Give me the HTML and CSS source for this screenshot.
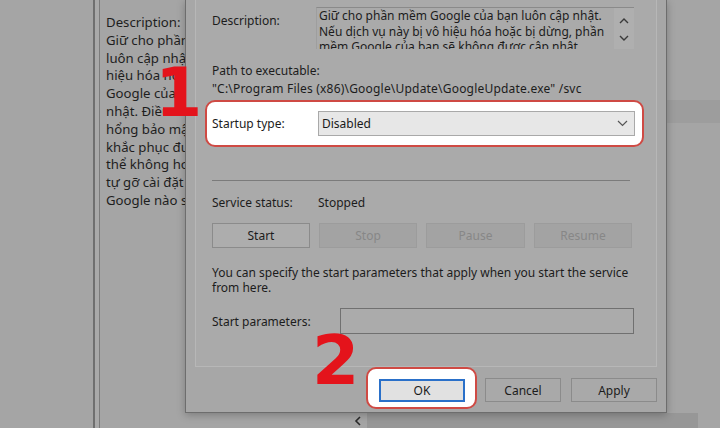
FILE: index.html
```html
<!DOCTYPE html>
<html lang="vi">
<head>
<meta charset="utf-8">
<title>Google Update Service Properties</title>
<link rel="stylesheet" href="styles.css">
</head>
<body>
<div class="screen">
  <div class="bg-left"></div>
  <div class="splitter"></div>
  <div class="bg-main">
    <div class="bg-top">
      <div class="desc-pane">
        <div>Description:</div>
        <div>Giữ cho phần</div>
        <div>luôn cập nhật.</div>
        <div>hiệu hóa hoặc</div>
        <div>Google của</div>
        <div>nhật. Điều</div>
        <div>hổng bảo mật</div>
        <div>khắc phục được</div>
        <div>thể không hoạt</div>
        <div>tự gỡ cài đặt</div>
        <div>Google nào sử</div>
      </div>
      <div class="under-dialog"></div>
      <div class="list-area"><div class="list-row"></div></div>
    </div>
    <div class="hscroll">
      <svg class="hs-arrow" width="8" height="10" viewBox="0 0 8 10"><polyline points="6,1 2,5 6,9" fill="none" stroke="#2a2a2a" stroke-width="1.6"/></svg>
      <div class="hs-track"></div>
    </div>
  </div>

  <div class="dialog">
    <div class="panel">
      <div class="row-desc">
        <div class="lbl lbl-desc">Description:</div>
        <div class="textarea">
          <div class="ta-text">
            <div>Giữ cho phần mềm Google của bạn luôn cập nhật.</div>
            <div>Nếu dịch vụ này bị vô hiệu hóa hoặc bị dừng, phần</div>
            <div>mềm Google của bạn sẽ không được cập nhật,</div>
          </div>
          <div class="ta-scroll">
            <svg width="10" height="7" viewBox="0 0 10 7"><polyline points="1,6 5,2 9,6" fill="none" stroke="#3a3a3a" stroke-width="1.4"/></svg>
            <svg width="10" height="7" viewBox="0 0 10 7"><polyline points="1,1 5,5 9,1" fill="none" stroke="#3a3a3a" stroke-width="1.4"/></svg>
          </div>
        </div>
      </div>
      <div class="path-lbl">Path to executable:</div>
      <div class="path-val">"C:\Program Files (x86)\Google\Update\GoogleUpdate.exe" /svc</div>

      <div class="startup">
        <div class="lbl lbl-startup">Startup type:</div>
        <div class="select">
          <span>Disabled</span>
          <svg width="11" height="7" viewBox="0 0 11 7"><polyline points="1,1 5.5,5.5 10,1" fill="none" stroke="#555" stroke-width="1.2"/></svg>
        </div>
      </div>

      <div class="separator"></div>

      <div class="status-row">
        <div class="lbl lbl-status">Service status:</div>
        <div>Stopped</div>
      </div>

      <div class="svc-buttons">
        <div class="btn">Start</div>
        <div class="btn disabled">Stop</div>
        <div class="btn disabled">Pause</div>
        <div class="btn disabled">Resume</div>
      </div>

      <div class="hint">You can specify the start parameters that apply when you start the service<br>from here.</div>

      <div class="params-row">
        <div class="lbl lbl-params">Start parameters:</div>
        <div class="input"></div>
      </div>
    </div>

    <div class="footer">
      <div class="ok-highlight"><div class="btn ok">OK</div></div>
      <div class="btn foot-btn cancel">Cancel</div>
      <div class="btn foot-btn apply">Apply</div>
    </div>
  </div>

  <span class="num num1">1</span>
  <span class="num num2">2</span>
</div>
</body>
</html>
```
FILE: styles.css
```css
html, body {
  margin: 0;
  padding: 0;
}
body {
  width: 720px;
  height: 428px;
  overflow: hidden;
  background: #a5a5a5;
  font-family: "Noto Sans", "Open Sans", sans-serif;
  font-size: 12px;
  color: #1c1c1c;
}
.screen {
  position: relative;
  width: 720px;
  height: 428px;
  display: flex;
  overflow: hidden;
  background: #a5a5a5;
}
.bg-left {
  width: 93px;
  flex: none;
}
.splitter {
  width: 7px;
  flex: none;
  box-sizing: border-box;
  border-left: 2px solid #6f6f6f;
  border-right: 1px solid #7c7c7c;
  background: #a9a9a9;
}
.bg-main {
  flex: 1;
  display: flex;
  flex-direction: column;
}
.bg-top {
  flex: 1;
  display: flex;
  overflow: hidden;
}
.desc-pane {
  width: 85px;
  flex: none;
  box-sizing: border-box;
  padding: 14px 0 0 6px;
  font-size: 13.2px;
  line-height: 17.8px;
  white-space: nowrap;
  overflow: hidden;
  color: #1e1e1e;
}
.under-dialog {
  width: 482px;
  flex: none;
}
.list-area {
  flex: 1;
  padding-top: 100px;
}
.list-row {
  height: 23px;
  background: #9d9d9d;
}
.hscroll {
  height: 15px;
  display: flex;
  align-items: center;
  padding-left: 254px;
}
.hs-arrow {
  display: block;
  margin-right: 5px;
  margin-top: 1px;
}
.hs-track {
  width: 331px;
  height: 15px;
  background: #979797;
}

/* dialog window */
.dialog {
  position: absolute;
  left: 185px;
  top: 0;
  width: 482px;
  height: 413px;
  box-sizing: border-box;
  border: 1px solid #6d6d6d;
  border-top: none;
  padding: 0 9px;
  background: #a7a7a7;
  box-shadow: 0 2px 8px rgba(0, 0, 0, 0.25);
}
.panel {
  height: 367px;
  box-sizing: border-box;
  border: 1px solid #b7b7b7;
  border-top: none;
  padding: 7px 0 0 16px;
  background: #aaaaaa;
}
.lbl {
  flex: none;
}
.row-desc {
  display: flex;
  align-items: flex-start;
}
.lbl-desc {
  width: 104px;
  margin-top: 6px;
  line-height: 16px;
}
.textarea {
  width: 318px;
  height: 42px;
  box-sizing: border-box;
  border-top: 1px solid #8a8a8a;
  border-left: 1px solid #9e9e9e;
  display: flex;
}
.ta-text {
  flex: 1;
  padding-left: 2px;
  line-height: 15.5px;
  white-space: nowrap;
  overflow: hidden;
}
.ta-scroll {
  width: 20px;
  flex: none;
  background: #afafaf;
  display: flex;
  flex-direction: column;
  align-items: center;
  gap: 11px;
  padding-top: 9px;
  box-sizing: border-box;
}
.ta-scroll svg {
  display: block;
}
.path-lbl {
  margin-top: 13px;
  line-height: 18px;
}
.path-val {
  line-height: 18px;
  white-space: nowrap;
  letter-spacing: 0.2px;
}
.startup {
  margin-top: 2px;
  margin-left: -7px;
  width: 439px;
  height: 47px;
  box-sizing: border-box;
  border: 2px solid #cf4a44;
  border-radius: 10px;
  background: #ffffff;
  display: flex;
  align-items: center;
  padding-left: 5px;
}
.lbl-startup {
  width: 106px;
}
.select {
  width: 317px;
  height: 25px;
  box-sizing: border-box;
  border: 1px solid #a9a9a9;
  background: #e7e7e7;
  display: flex;
  align-items: center;
  justify-content: space-between;
  padding: 0 6px 0 3px;
  color: #1a1a1a;
}
.select svg {
  display: block;
}
.separator {
  margin-top: 33px;
  width: 418px;
  border-top: 1px solid #7b7b7b;
}
.status-row {
  margin-top: 14px;
  line-height: 16px;
  display: flex;
}
.lbl-status {
  width: 106px;
}
.svc-buttons {
  margin-top: 12px;
  display: grid;
  grid-template-columns: 98px 98px 99px 98px;
  column-gap: 9px;
}
.btn {
  height: 25px;
  box-sizing: border-box;
  border: 1px solid #8b8b8b;
  background: #adadad;
  display: flex;
  align-items: center;
  justify-content: center;
  color: #1c1c1c;
}
.btn.disabled {
  border-color: #9c9c9c;
  background: #a3a3a3;
  color: #878787;
}
.hint {
  margin-top: 17px;
  line-height: 15px;
  white-space: nowrap;
}
.params-row {
  margin-top: 13px;
  display: flex;
  align-items: center;
}
.lbl-params {
  width: 128px;
}
.input {
  width: 294px;
  height: 26px;
  box-sizing: border-box;
  border: 1px solid #707070;
  background: #ababab;
}
.footer {
  display: flex;
  justify-content: flex-end;
  align-items: flex-start;
}
.ok-highlight {
  width: 111px;
  height: 42px;
  box-sizing: border-box;
  border: 2px solid #cf4a44;
  border-radius: 10px;
  background: #ffffff;
  padding: 10px 0 0 11px;
}
.btn.ok {
  width: 86px;
  height: 23px;
  border: 2px solid #2a70c9;
  background: #e1e1e1;
  color: #1a1a1a;
}
.foot-btn {
  margin-top: 11px;
  height: 24px;
  background: #a9a9a9;
}
.cancel {
  width: 76px;
  margin-left: 8px;
}
.apply {
  width: 86px;
  margin-left: 10px;
}

/* annotation numbers */
.num {
  position: absolute;
  font-family: "DejaVu Sans", sans-serif;
  font-weight: bold;
  font-size: 68px;
  line-height: 1;
  color: #e4131b;
}
.num1 {
  left: 155px;
  top: 59px;
}
.num2 {
  left: 312px;
  top: 327px;
}
```
